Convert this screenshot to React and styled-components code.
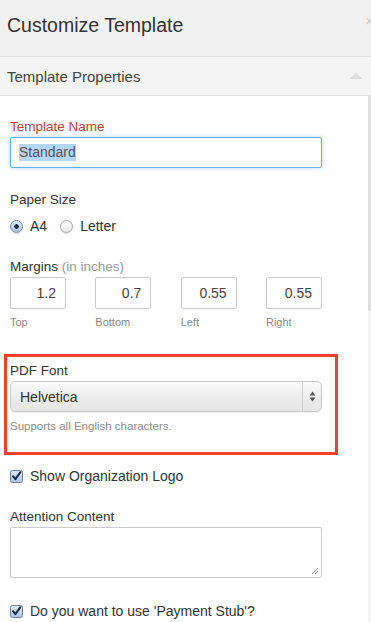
import styled, { createGlobalStyle } from "styled-components";

const GlobalStyle = createGlobalStyle`
  body {
    margin: 0;
    background: #ffffff;
    font-family: "Liberation Sans", Arial, sans-serif;
    color: #333;
  }
  * { box-sizing: border-box; }
`;

const App = () => {
  return (
    <Panel>
      <GlobalStyle />
      <Header>
        <Title>Customize Template</Title>
        <Close>×</Close>
      </Header>
      <SectionHead>
        <SectionTitle>Template Properties</SectionTitle>
        <Caret />
      </SectionHead>
      <Body>
        <Content>
          <Field $top={23}>
            <Label $required>Template Name</Label>
            <TextBox $focused>
              <Selected>Standard</Selected>
            </TextBox>
          </Field>

          <Field $top={24}>
            <Label>Paper Size</Label>
            <RadioRow>
              <Option>
                <Radio $checked />
                A4
              </Option>
              <Option>
                <Radio />
                Letter
              </Option>
            </RadioRow>
          </Field>

          <Field $top={25}>
            <Label>
              Margins <Muted>(in inches)</Muted>
            </Label>
            <MarginGrid>
              {[
                ["1.2", "Top"],
                ["0.7", "Bottom"],
                ["0.55", "Left"],
                ["0.55", "Right"],
              ].map(([value, name]) => (
                <MarginCell key={name}>
                  <NumberBox>{value}</NumberBox>
                  <Hint>{name}</Hint>
                </MarginCell>
              ))}
            </MarginGrid>
          </Field>

          <Highlight>
            <Label>PDF Font</Label>
            <Select>
              <SelectText>Helvetica</SelectText>
              <SelectArrows>
                <svg width="7" height="11" viewBox="0 0 7 11">
                  <path d="M3.5 0.5 L6.5 4.5 L0.5 4.5 Z" fill="#555" />
                  <path d="M3.5 10.5 L6.5 6.5 L0.5 6.5 Z" fill="#555" />
                </svg>
              </SelectArrows>
            </Select>
            <Help>Supports all English characters.</Help>
          </Highlight>

          <CheckRow $top={14}>
            <CheckBox />
            Show Organization Logo
          </CheckRow>

          <Field $top={26}>
            <Label>Attention Content</Label>
            <TextArea>
              <Grip>
                <svg width="8" height="8" viewBox="0 0 8 8">
                  <path d="M7 1 L1 7 M7 4 L4 7" stroke="#888" strokeWidth="1" />
                </svg>
              </Grip>
            </TextArea>
          </Field>

          <CheckRow $top={26}>
            <CheckBox />
            Do you want to use 'Payment Stub'?
          </CheckRow>
        </Content>
        <ScrollTrack>
          <ScrollThumb />
        </ScrollTrack>
      </Body>
    </Panel>
  );
};

const CheckBox = () => (
  <CheckFrame>
    <svg width="13" height="13" viewBox="0 0 13 13">
      <defs>
        <linearGradient id="cbg" x1="0" y1="0" x2="0" y2="1">
          <stop offset="0" stopColor="#dfeaf8" />
          <stop offset="1" stopColor="#a9c4e6" />
        </linearGradient>
      </defs>
      <rect x="0.5" y="0.5" width="12" height="12" rx="2" fill="url(#cbg)" stroke="#6d7f99" />
      <path d="M3 6.2 L5.4 9.2 L10.4 2.2" fill="none" stroke="#1e2a44" strokeWidth="2" strokeLinecap="round" strokeLinejoin="round" />
    </svg>
  </CheckFrame>
);

const Panel = styled.div`
  width: 371px;
  height: 622px;
  overflow: hidden;
  background: #fff;
`;

const Header = styled.div`
  height: 57px;
  background: #f1f1f1;
  border-bottom: 1px solid #e2e2e2;
  display: flex;
  align-items: center;
  justify-content: space-between;
  padding: 0 0 6px 7px;
`;

const Title = styled.div`
  font-size: 19.5px;
  color: #333;
`;

const Close = styled.div`
  font-size: 15px;
  color: #c8c8c8;
  margin-right: -3px;
  margin-top: -10px;
`;

const SectionHead = styled.div`
  height: 39px;
  background: #f4f4f4;
  border-bottom: 1px solid #e2e2e2;
  display: flex;
  align-items: center;
  justify-content: space-between;
  padding: 0 8px 0 7px;
`;

const SectionTitle = styled.div`
  font-size: 15px;
  color: #444;
`;

const Caret = styled.div`
  width: 0;
  height: 0;
  border-left: 7px solid transparent;
  border-right: 7px solid transparent;
  border-bottom: 6px solid #dcdcdc;
`;

const Body = styled.div`
  display: flex;
  height: 526px;
`;

const Content = styled.div`
  flex: 1;
  padding: 0 10px;
  display: flex;
  flex-direction: column;
`;

const ScrollTrack = styled.div`
  width: 3px;
  background: #f3f3f3;
`;

const ScrollThumb = styled.div`
  height: 215px;
  background: #dddddd;
`;

const Field = styled.div`
  margin-top: ${(p) => p.$top}px;
  display: flex;
  flex-direction: column;
  width: 312px;
`;

const Label = styled.div`
  font-size: 13.5px;
  line-height: 15px;
  color: ${(p) => (p.$required ? "#c0413a" : "#333")};
  margin-bottom: 3px;
`;

const Muted = styled.span`
  color: #999;
`;

const TextBox = styled.div`
  height: 31px;
  border: 1px solid ${(p) => (p.$focused ? "#6aaee6" : "#ccc")};
  border-radius: 2px;
  box-shadow: ${(p) => (p.$focused ? "0 0 4px rgba(102, 175, 233, 0.5)" : "none")};
  display: flex;
  align-items: center;
  padding-left: 8px;
  font-size: 14px;
  color: #555;
`;

const Selected = styled.span`
  background: #b4d5fe;
  line-height: 17px;
`;

const RadioRow = styled.div`
  display: flex;
  gap: 13px;
  margin-top: 8px;
`;

const Option = styled.div`
  display: flex;
  align-items: center;
  gap: 7px;
  font-size: 14px;
  color: #333;
`;

const Radio = styled.span`
  width: 13px;
  height: 13px;
  border-radius: 50%;
  border: 1px solid ${(p) => (p.$checked ? "#7b8ea8" : "#a8a8a8")};
  background: ${(p) =>
    p.$checked
      ? "radial-gradient(circle, #1c2b45 0 2px, transparent 2.5px), linear-gradient(#e2ecf9, #a8c2e4)"
      : "linear-gradient(#ffffff, #e6e6e6)"};
  box-shadow: 0 1px 1px rgba(0, 0, 0, 0.12);
`;

const MarginGrid = styled.div`
  display: grid;
  grid-template-columns: repeat(4, 56px);
  justify-content: space-between;
`;

const MarginCell = styled.div`
  display: flex;
  flex-direction: column;
`;

const NumberBox = styled.div`
  height: 32px;
  border: 1px solid #ccc;
  border-radius: 2px;
  display: flex;
  align-items: center;
  justify-content: flex-end;
  padding-right: 9px;
  font-size: 14px;
  color: #444;
`;

const Hint = styled.div`
  margin-top: 6px;
  font-size: 11px;
  line-height: 14px;
  color: #888;
`;

const Highlight = styled.div`
  margin: 25px 0 0 -6px;
  width: 334px;
  border: 3px solid #f4402c;
  padding: 6px 13px 18px 3px;
  display: flex;
  flex-direction: column;
`;

const Select = styled.div`
  height: 31px;
  border: 1px solid #c9c9c9;
  border-radius: 5px;
  background: linear-gradient(#fbfbfb, #ececec 55%, #e6e6e6);
  display: flex;
  align-items: center;
  box-shadow: 0 1px 1px rgba(0, 0, 0, 0.06);
`;

const SelectText = styled.div`
  flex: 1;
  padding-left: 9px;
  font-size: 14px;
  color: #333;
`;

const SelectArrows = styled.div`
  width: 19px;
  height: 100%;
  border-left: 1px solid #d0d0d0;
  display: flex;
  align-items: center;
  justify-content: center;
`;

const Help = styled.div`
  margin-top: 7px;
  font-size: 11.5px;
  line-height: 15px;
  color: #8a8a8a;
`;

const CheckRow = styled.div`
  margin-top: ${(p) => p.$top}px;
  display: flex;
  align-items: center;
  gap: 7px;
  font-size: 14px;
  line-height: 14px;
  color: #333;
`;

const CheckFrame = styled.span`
  display: flex;
  width: 13px;
  height: 13px;
`;

const TextArea = styled.div`
  height: 51px;
  border: 1px solid #ccc;
  border-radius: 2px;
  display: flex;
  align-items: flex-end;
  justify-content: flex-end;
  padding: 0 2px 2px 0;
`;

const Grip = styled.span`
  display: flex;
`;

export default App;
